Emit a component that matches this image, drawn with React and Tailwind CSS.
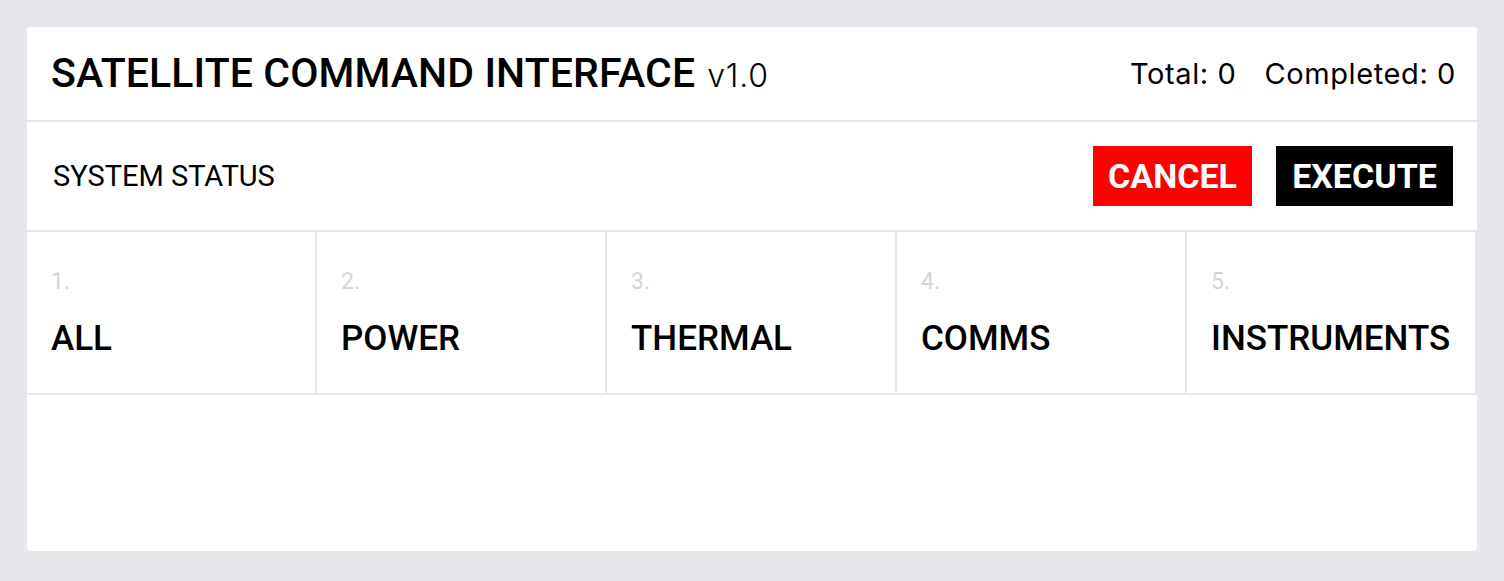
import React from "react";

const tabs = [
  { num: "1.", label: "ALL" },
  { num: "2.", label: "POWER" },
  { num: "3.", label: "THERMAL" },
  { num: "4.", label: "COMMS" },
  { num: "5.", label: "INSTRUMENTS" },
];

function App() {
  return (
    <div className="min-h-screen bg-[#e5e7eb] px-[27px] pt-[27px] pb-[30px] flex flex-col font-['Roboto',sans-serif] text-black">
      <div className="flex-1 flex flex-col bg-white rounded-sm overflow-hidden">
        {/* header */}
        <div className="h-[95px] flex items-center justify-between pl-6 pr-[21px] border-b-2 border-[#e5e7eb]">
          <div className="flex items-baseline gap-3">
            <h1 className="text-[41px] leading-none font-medium tracking-[0.1px]">SATELLITE COMMAND INTERFACE</h1>
            <span className="text-[32px] leading-none font-light font-['Inter',sans-serif] tracking-[0.8px]">v1.0</span>
          </div>
          <div className="flex items-center gap-[28px] text-[29px] leading-none font-['Inter',sans-serif] tracking-[0.6px]">
            <span>Total: 0</span>
            <span>Completed: 0</span>
          </div>
        </div>

        {/* status row */}
        <div className="h-[110px] flex items-center justify-between px-6 border-b-2 border-[#e5e7eb]">
          <span className="ml-[2px] text-[29px] leading-none">SYSTEM STATUS</span>
          <div className="flex items-center gap-6">
            <button className="h-[60px] w-[159px] bg-[#ff0000] text-white text-[34px] font-bold leading-none">
              CANCEL
            </button>
            <button className="h-[60px] w-[177px] bg-black text-white text-[34px] font-bold leading-none">
              EXECUTE
            </button>
          </div>
        </div>

        {/* tabs */}
        <div className="grid grid-cols-5 border-b-2 border-[#e5e7eb]">
          {tabs.map((t) => (
            <div key={t.num} className="border-r-2 border-[#e5e7eb] px-6 pt-[38px] pb-[37px] flex flex-col">
              <span className="text-[23px] leading-none text-[#d4d4d8]">{t.num}</span>
              <span className="mt-[28px] text-[35px] leading-none font-medium">{t.label}</span>
            </div>
          ))}
        </div>

        <div className="flex-1" />
      </div>
    </div>
  );
}

export default App;
